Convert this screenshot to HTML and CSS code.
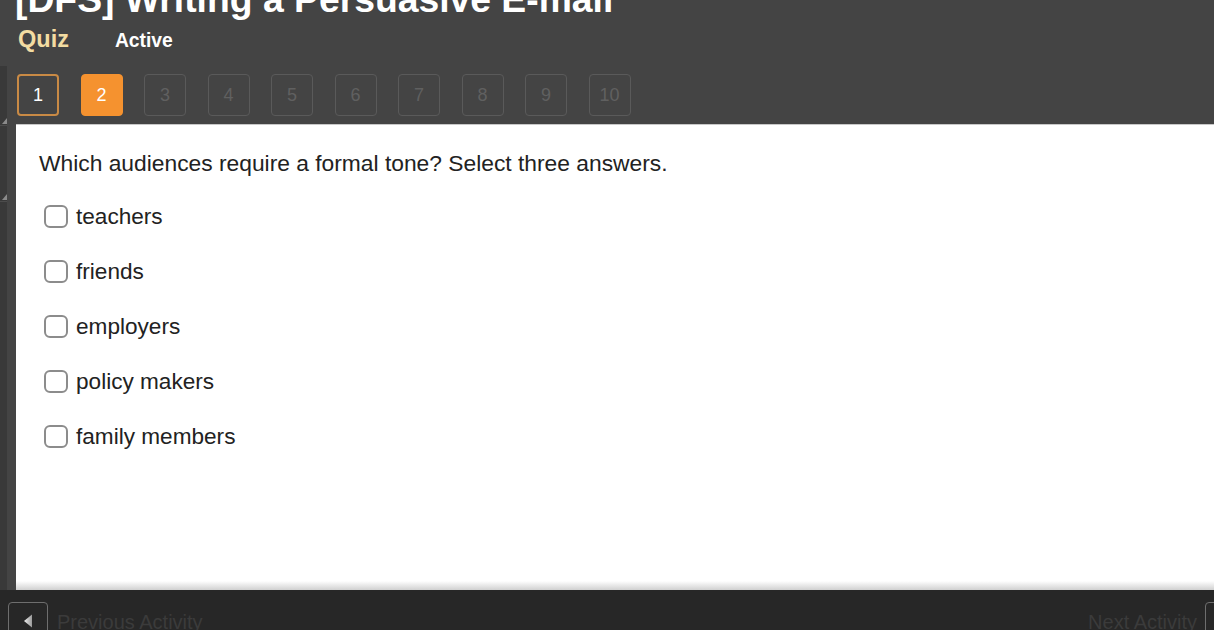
FILE: index.html
```html
<!DOCTYPE html>
<html lang="en">
<head>
<meta charset="utf-8">
<title>Quiz</title>
<link rel="stylesheet" href="styles.css">
</head>
<body>
<div class="app">
  <div class="title-wrap"><h1 class="title">[DFS] Writing a Persuasive E-mail</h1></div>
  <div class="tabs">
    <span class="tab tab-quiz">Quiz</span>
    <span class="tab tab-active">Active</span>
  </div>
  <div class="body">
    <aside class="rail">
      <div class="rail-bar">
        <div class="rail-seg seg-a"><span class="corner"></span></div>
        <div class="rail-seg seg-b"><span class="corner"></span></div>
        <div class="rail-rest"></div>
      </div>
    </aside>
    <div class="main">
      <nav class="pager">
        <span class="page page-visited">1</span>
        <span class="page page-current">2</span>
        <span class="page">3</span>
        <span class="page">4</span>
        <span class="page">5</span>
        <span class="page">6</span>
        <span class="page">7</span>
        <span class="page">8</span>
        <span class="page">9</span>
        <span class="page">10</span>
      </nav>
      <section class="content">
        <p class="question">Which audiences require a formal tone? Select three answers.</p>
        <ul class="options">
          <li class="option"><span class="box"></span><span class="label">teachers</span></li>
          <li class="option"><span class="box"></span><span class="label">friends</span></li>
          <li class="option"><span class="box"></span><span class="label">employers</span></li>
          <li class="option"><span class="box"></span><span class="label">policy makers</span></li>
          <li class="option"><span class="box"></span><span class="label">family members</span></li>
        </ul>
      </section>
    </div>
  </div>
  <footer class="footer">
    <div class="nav-link">
      <span class="nav-btn"><svg class="arrow" viewBox="0 0 10 16" width="8" height="14"><defs><linearGradient id="g1" x1="0" y1="0" x2="1" y2="0"><stop offset="0" stop-color="#f2f2f2"/><stop offset="1" stop-color="#9a9a9a"/></linearGradient></defs><path d="M0 8 L10 0 L10 16 Z" fill="url(#g1)"/></svg></span>
      <span class="nav-text">Previous Activity</span>
    </div>
    <div class="nav-link">
      <span class="nav-text">Next Activity</span>
      <span class="nav-btn"></span>
    </div>
  </footer>
</div>
</body>
</html>
```
FILE: styles.css
```css
* { box-sizing: border-box; }
html, body { margin: 0; padding: 0; }
body {
  background: #444444;
  font-family: "Liberation Sans", Arial, Helvetica, sans-serif;
  overflow: hidden;
}
.app {
  width: 1214px;
  height: 630px;
  display: flex;
  flex-direction: column;
  background: #444444;
  overflow: hidden;
}
.title-wrap {
  height: 20px;
  flex: none;
  overflow: hidden;
  padding-left: 15px;
}
.title {
  margin: -21px 0 0 0;
  font-size: 37.3px;
  line-height: 40px;
  font-weight: bold;
  color: #ffffff;
  white-space: nowrap;
}
.tabs {
  height: 46px;
  flex: none;
  display: flex;
  align-items: baseline;
  gap: 46px;
  padding: 4px 0 0 18px;
  line-height: 30px;
}
.tab { font-weight: bold; }
.tab-quiz { color: #f3dca2; font-size: 23.5px; }
.tab-active { color: #ffffff; font-size: 19.3px; }
.body {
  flex: 1;
  display: flex;
  min-height: 0;
}
.rail {
  width: 16px;
  flex: none;
  display: flex;
}
.rail-bar {
  width: 7px;
  display: flex;
  flex-direction: column;
  background: #393939;
}
.rail-seg {
  position: relative;
  border-bottom: 1px solid #4c4c4c;
}
.seg-a { height: 60px; }
.seg-b { height: 76px; }
.rail-rest { flex: 1; }
.corner {
  position: absolute;
  right: 0;
  bottom: 1px;
  width: 0;
  height: 0;
  border-left: 5px solid transparent;
  border-bottom: 6px solid #8a8a8a;
}
.main {
  flex: 1;
  display: flex;
  flex-direction: column;
  min-width: 0;
}
.pager {
  height: 58px;
  flex: none;
  display: flex;
  gap: 21.5px;
  padding: 8px 0 0 1px;
}
.page {
  width: 42px;
  height: 42px;
  border: 1.5px solid #5a5a5a;
  border-radius: 4px;
  display: flex;
  align-items: center;
  justify-content: center;
  font-size: 18px;
  color: #606060;
}
.page-visited {
  border: 2px solid #c98a45;
  color: #ffffff;
}
.page-current {
  border-color: #f5922f;
  background: #f5922f;
  color: #ffffff;
}
.content {
  flex: 1;
  background: linear-gradient(to bottom, #ffffff 0, #ffffff calc(100% - 9px), #d0d0d0 100%);
  border-top: 1px solid #c8c8c8;
  padding: 25px 0 0 23px;
  color: #222222;
}
.question {
  margin: 0;
  font-size: 22.8px;
  line-height: 26px;
}
.options {
  list-style: none;
  margin: 13px 0 0 0;
  padding: 0 0 0 5px;
}
.option {
  height: 55px;
  display: flex;
  align-items: center;
  gap: 8px;
  font-size: 22.6px;
}
.box {
  width: 24px;
  height: 23px;
  border: 2px solid #8c8c8c;
  border-radius: 6px;
  background: #ffffff;
  flex: none;
}
.footer {
  height: 40px;
  flex: none;
  background: #272727;
  display: flex;
  justify-content: space-between;
  padding: 12px 0 0 8px;
  overflow: hidden;
}
.nav-link {
  display: flex;
  align-items: flex-start;
  gap: 9px;
}
.nav-link:last-child { margin-right: -31px; gap: 8px; }
.nav-btn {
  width: 40px;
  height: 40px;
  border: 1.5px solid #6e6e6e;
  border-radius: 4px;
  flex: none;
  display: flex;
  align-items: center;
  justify-content: center;
  padding-bottom: 5px;
}
.arrow { display: block; margin-top: 2px; }
.nav-text {
  font-size: 20px;
  line-height: 24px;
  color: #3b3b3b;
  margin-top: 8px;
}
```
